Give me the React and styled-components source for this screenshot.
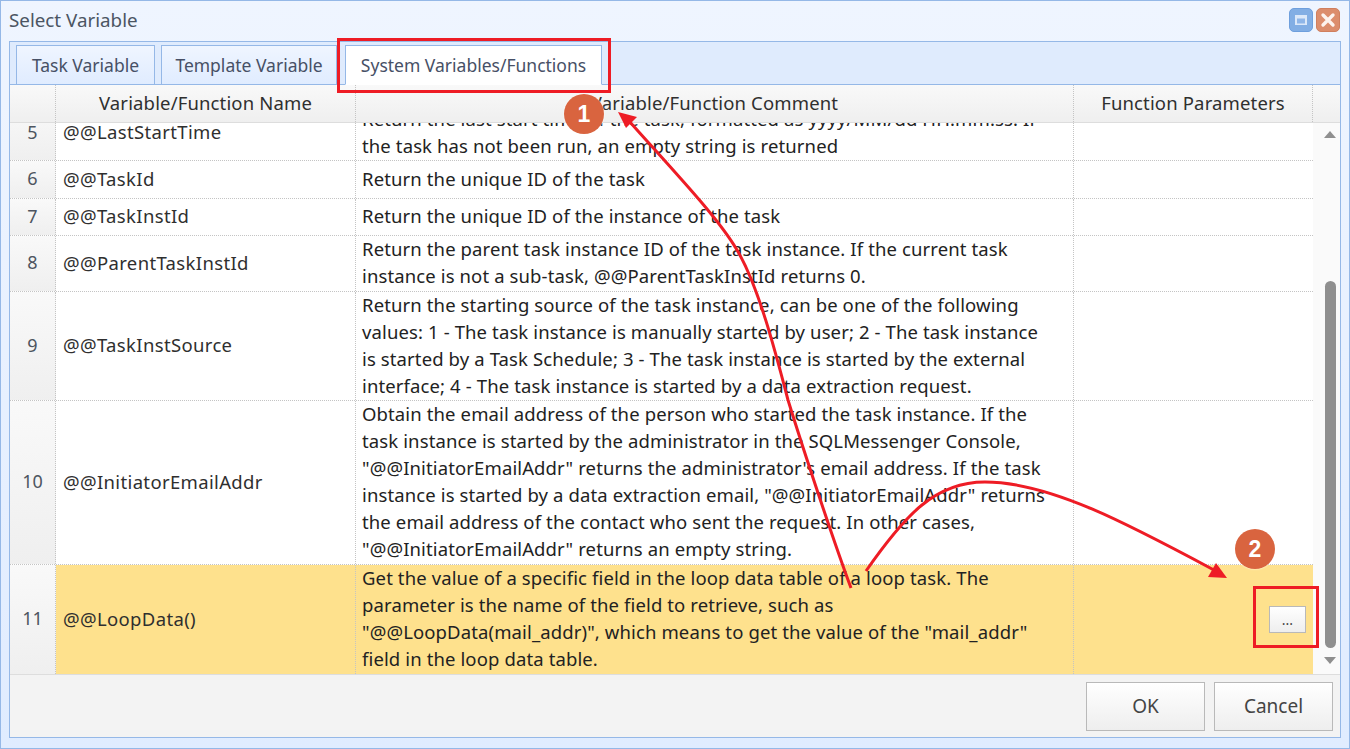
import * as React from 'react';
import styled, { createGlobalStyle } from 'styled-components';

const GlobalStyle = createGlobalStyle`
  html, body {
    margin: 0;
    padding: 0;
    background: #ffffff;
    font-family: 'Noto Sans', 'Open Sans', sans-serif;
  }
`;

const Window = styled.div`
  position: relative;
  width: 1350px;
  height: 749px;
  box-sizing: border-box;
  border: 1px solid #95b8e7;
  background: linear-gradient(to bottom, #eff5ff 0, #e0ecff 100%);
  overflow: hidden;
  display: flex;
  flex-direction: column;
`;

const TitleBar = styled.div`
  height: 40px;
  flex-shrink: 0;
  display: flex;
  align-items: center;
  justify-content: space-between;
  padding: 0 9px 0 8px;
`;

const TitleText = styled.div`
  font-size: 18.8px;
  color: #4b5563;
  margin-top: -2px;
`;

const WindowButtons = styled.div`
  display: flex;
  gap: 3px;
  margin-top: -2px;
`;

const WindowButton = styled.div`
  width: 24px;
  height: 24px;
  box-sizing: border-box;
  border-radius: 5px;
  display: flex;
  align-items: center;
  justify-content: center;
  background: ${(p) => (p.$close ? '#dc8d6c' : '#82aee4')};
  border: 1px solid ${(p) => (p.$close ? '#d07f5e' : '#6e9fdd')};
`;

const Panel = styled.div`
  flex: 1;
  margin: 0 8px 10px 8px;
  border: 1px solid #95b8e7;
  background: #f3f3f3;
  display: flex;
  flex-direction: column;
  min-height: 0;
`;

const TabStrip = styled.div`
  height: 43px;
  flex-shrink: 0;
  box-sizing: border-box;
  display: flex;
  align-items: flex-end;
  gap: 6px;
  padding-left: 6px;
  background: #dfebfd;
  border-bottom: 1px solid #95b8e7;
`;

const Tab = styled.div`
  height: 40px;
  box-sizing: border-box;
  display: flex;
  align-items: center;
  justify-content: center;
  width: ${(p) => p.$width}px;
  margin-left: ${(p) => p.$gap || 0}px;
  margin-bottom: -1px;
  font-size: 17.5px;
  color: #475066;
  border: 1px solid #95b8e7;
  border-bottom: ${(p) => (p.$active ? '1px solid #ffffff' : '1px solid #95b8e7')};
  background: ${(p) => (p.$active ? '#ffffff' : 'linear-gradient(to bottom, #eff5ff 0, #e0ecff 100%)')};
`;

const COLUMNS = '46px 300px 718px 239px 1fr';

const HeaderRow = styled.div`
  height: 38px;
  flex-shrink: 0;
  box-sizing: border-box;
  display: grid;
  grid-template-columns: ${COLUMNS};
  background: linear-gradient(to bottom, #f9f9f9 0, #efefef 100%);
  border-bottom: 1px solid #dddddd;
`;

const HeaderCell = styled.div`
  display: flex;
  align-items: center;
  justify-content: center;
  font-size: 18.5px;
  letter-spacing: 0.15px;
  color: #2f2f2f;
  box-sizing: border-box;
  border-right: 1px dotted #c4c4c4;
  padding-bottom: 3px;
  &:last-child {
    border-right: none;
  }
`;

const BodyArea = styled.div`
  height: 551px;
  flex-shrink: 0;
  display: flex;
  background: #ffffff;
  border-bottom: 1px solid #dddddd;
`;

const Rows = styled.div`
  width: 1303px;
  overflow: hidden;
`;

const Row = styled.div`
  display: grid;
  grid-template-columns: 46px 300px 718px 239px;
  grid-template-rows: minmax(0, 1fr);
  height: ${(p) => p.$height}px;
  margin-top: ${(p) => p.$offset || 0}px;
  box-sizing: border-box;
  border-bottom: 1px dotted #c4c4c4;
  background: ${(p) => (p.$selected ? '#fee18d' : '#ffffff')};
  &:last-child {
    border-bottom: none;
  }
`;

const RowNumber = styled.div`
  display: flex;
  align-items: center;
  justify-content: center;
  font-size: 18px;
  color: #4e5560;
  box-sizing: border-box;
  padding-bottom: 3px;
  border-right: 1px dotted #c4c4c4;
  background: linear-gradient(to bottom, #f9f9f9 0, #efefef 100%);
`;

const NameCell = styled.div`
  display: flex;
  align-items: center;
  padding: 0 0 3px 7px;
  font-size: 18.5px;
  letter-spacing: 0.35px;
  color: #2f2f2f;
  box-sizing: border-box;
  border-right: 1px dotted #c4c4c4;
`;

const CommentCell = styled.div`
  display: flex;
  align-items: center;
  padding: 0 0 3px 6px;
  font-size: 18.5px;
  letter-spacing: 0.12px;
  line-height: 27px;
  color: #222222;
  white-space: pre-line;
  box-sizing: border-box;
  border-right: 1px dotted #c4c4c4;
`;

const ParamCell = styled.div`
  display: flex;
  align-items: center;
  justify-content: flex-end;
  padding-right: 7px;
`;

const DotsButton = styled.div`
  width: 37px;
  height: 27px;
  box-sizing: border-box;
  border: 1px solid #b9b9b9;
  background: linear-gradient(to bottom, #ffffff 0, #eeeeee 100%);
  display: flex;
  align-items: center;
  justify-content: center;
  font-size: 14px;
  color: #444444;
`;

const ScrollBar = styled.div`
  flex: 1;
  background: #fafafa;
  display: flex;
  flex-direction: column;
  align-items: center;
  padding-left: 7px;
`;

const ScrollUp = styled.div`
  margin-top: 8px;
  width: 0;
  height: 0;
  border-left: 6.5px solid transparent;
  border-right: 6.5px solid transparent;
  border-bottom: 7px solid #8f8f8f;
`;

const ScrollThumb = styled.div`
  margin-top: 143px;
  width: 11px;
  height: 367px;
  border-radius: 6px;
  background: #8f8f8f;
`;

const ScrollDown = styled.div`
  margin-top: 9px;
  width: 0;
  height: 0;
  border-left: 6.5px solid transparent;
  border-right: 6.5px solid transparent;
  border-top: 7px solid #8f8f8f;
`;

const Footer = styled.div`
  flex: 1;
  display: flex;
  justify-content: flex-end;
  align-items: center;
  gap: 9px;
  padding-right: 7px;
`;

const FooterButton = styled.div`
  width: 119px;
  height: 49px;
  box-sizing: border-box;
  border: 1px solid #b9b9b9;
  background: linear-gradient(to bottom, #ffffff 0, #eeeeee 100%);
  display: flex;
  align-items: center;
  justify-content: center;
  font-size: 19px;
  color: #444444;
`;

const Badge = styled.div`
  position: absolute;
  left: ${(p) => p.$x - 20}px;
  top: ${(p) => p.$y - 20}px;
  width: 40px;
  height: 40px;
  border-radius: 50%;
  background: #d9643f;
  box-shadow: 0 0 2px #ffffff;
  color: #ffffff;
  font-family: 'Liberation Sans', sans-serif;
  font-size: 23px;
  font-weight: 700;
  display: flex;
  align-items: center;
  justify-content: center;
`;

const Marker = styled.div`
  position: absolute;
  left: ${(p) => p.$x}px;
  top: ${(p) => p.$y}px;
  width: ${(p) => p.$w}px;
  height: ${(p) => p.$h}px;
  box-sizing: border-box;
  border: 3px solid #ee1c25;
  pointer-events: none;
`;

const ArrowLayer = styled.svg`
  position: absolute;
  left: -1px;
  top: -1px;
  width: 1350px;
  height: 749px;
  pointer-events: none;
`;

const rows = [
  {
    id: 5,
    name: '@@LastStartTime',
    height: 55,
    offset: -17,
    comment: 'Return the last start time of the task, formatted as yyyy/MM/dd HH:mm:ss. If\nthe task has not been run, an empty string is returned',
  },
  { id: 6, name: '@@TaskId', height: 38, comment: 'Return the unique ID of the task' },
  { id: 7, name: '@@TaskInstId', height: 37, comment: 'Return the unique ID of the instance of the task' },
  {
    id: 8,
    name: '@@ParentTaskInstId',
    height: 56,
    comment: 'Return the parent task instance ID of the task instance. If the current task\ninstance is not a sub-task, @@ParentTaskInstId returns 0.',
  },
  {
    id: 9,
    name: '@@TaskInstSource',
    height: 109,
    comment:
      'Return the starting source of the task instance, can be one of the following\nvalues: 1 - The task instance is manually started by user; 2 - The task instance\nis started by a Task Schedule; 3 - The task instance is started by the external\ninterface; 4 - The task instance is started by a data extraction request.',
  },
  {
    id: 10,
    name: '@@InitiatorEmailAddr',
    height: 164,
    comment:
      'Obtain the email address of the person who started the task instance. If the\ntask instance is started by the administrator in the SQLMessenger Console,\n"@@InitiatorEmailAddr" returns the administrator\'s email address. If the task\ninstance is started by a data extraction email, "@@InitiatorEmailAddr" returns\nthe email address of the contact who sent the request. In other cases,\n"@@InitiatorEmailAddr" returns an empty string.',
  },
  {
    id: 11,
    name: '@@LoopData()',
    height: 109,
    selected: true,
    hasButton: true,
    comment:
      'Get the value of a specific field in the loop data table of a loop task. The\nparameter is the name of the field to retrieve, such as\n"@@LoopData(mail_addr)", which means to get the value of the "mail_addr"\nfield in the loop data table.',
  },
];

const App = () => {
  return (
    <>
      <GlobalStyle />
      <Window>
        <TitleBar>
          <TitleText>Select Variable</TitleText>
          <WindowButtons>
            <WindowButton>
              <svg width="14" height="14" viewBox="0 0 14 14">
                <rect x="1" y="2" width="12" height="10" fill="#dbe8f9" />
                <rect x="3" y="5.5" width="8" height="5" fill="#8fb6e8" />
              </svg>
            </WindowButton>
            <WindowButton $close>
              <svg width="16" height="16" viewBox="0 0 16 16">
                <path d="M3 3 L13 13 M13 3 L3 13" stroke="#fdf3ee" strokeWidth="3.4" strokeLinecap="round" />
              </svg>
            </WindowButton>
          </WindowButtons>
        </TitleBar>

        <Panel>
          <TabStrip>
            <Tab $width={139}>Task Variable</Tab>
            <Tab $width={176}>Template Variable</Tab>
            <Tab $width={257} $gap={2} $active>
              System Variables/Functions
            </Tab>
          </TabStrip>

          <HeaderRow>
            <HeaderCell />
            <HeaderCell>Variable/Function Name</HeaderCell>
            <HeaderCell>Variable/Function Comment</HeaderCell>
            <HeaderCell>Function Parameters</HeaderCell>
            <HeaderCell />
          </HeaderRow>

          <BodyArea>
            <Rows>
              {rows.map((row) => {
                return (
                  <Row key={row.id} $height={row.height} $offset={row.offset} $selected={row.selected}>
                    <RowNumber>{row.id}</RowNumber>
                    <NameCell>{row.name}</NameCell>
                    <CommentCell>{row.comment}</CommentCell>
                    <ParamCell>{row.hasButton && <DotsButton>...</DotsButton>}</ParamCell>
                  </Row>
                );
              })}
            </Rows>
            <ScrollBar>
              <ScrollUp />
              <ScrollThumb />
              <ScrollDown />
            </ScrollBar>
          </BodyArea>

          <Footer>
            <FooterButton>OK</FooterButton>
            <FooterButton>Cancel</FooterButton>
          </Footer>
        </Panel>

        <Marker $x={336} $y={37} $w={274} $h={55} />
        <Marker $x={1252} $y={585} $w={66} $h={62} />

        <ArrowLayer viewBox="0 0 1350 749">
          <path d="M851 588 C835 545 805 455 788 400 C775 350 758 285 737 250 C718 218 680 178 629 121" fill="none" stroke="#ee1c25" strokeWidth="3" />
          <polygon points="618,112 637,117 626,128" fill="#ee1c25" />
          <path d="M866 571 C905 515 935 482 985 482 C1050 482 1130 525 1214 570" fill="none" stroke="#ee1c25" strokeWidth="3" />
          <polygon points="1227,578 1208,577 1216,563" fill="#ee1c25" />
        </ArrowLayer>

        <Badge $x={583} $y={113}>1</Badge>
        <Badge $x={1254} $y={548}>2</Badge>
      </Window>
    </>
  );
};

export default App;
